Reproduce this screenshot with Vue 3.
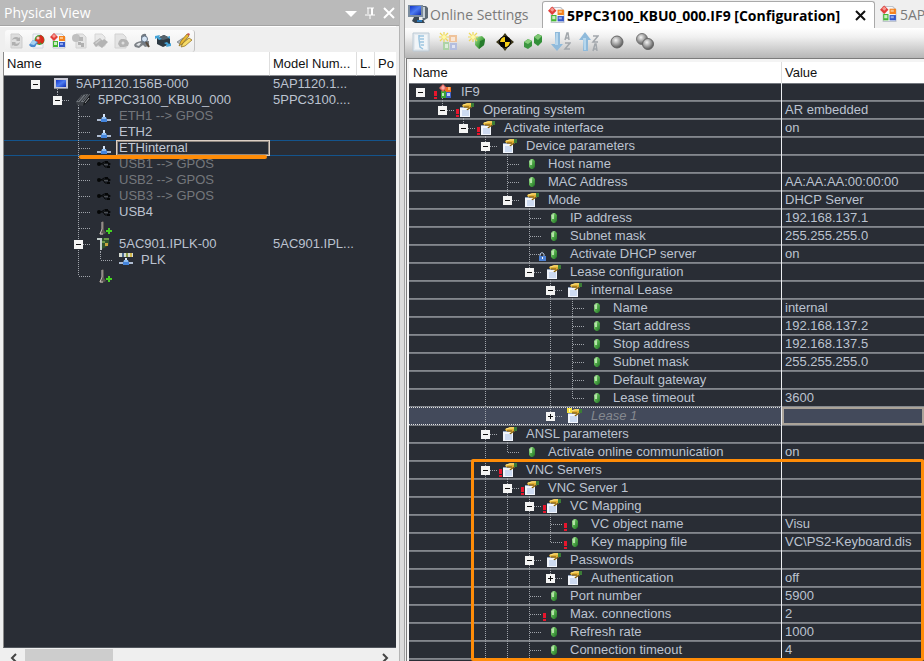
<script setup>
const leftTools = ['refresh', 'sphere', 'blocks', 'grayNodes', 'grayChip', 'grayGear', 'magnify', 'swap', 'pencil']
const rightTools = ['paramList', 'newGroup', 'newGem', 'target', 'gems', 'sortDown', 'sortUp', 'ball', 'balls']

const hardware = [
  { d: 0, name: '5AP1120.156B-000', model: '5AP1120.1...', icon: 'screen', box: '-', last: true },
  { d: 1, name: '5PPC3100_KBU0_000', model: '5PPC3100....', icon: 'pc', box: '-', last: true },
  { d: 2, name: 'ETH1 --> GPOS', icon: 'eth', dim: true },
  { d: 2, name: 'ETH2', icon: 'eth' },
  { d: 2, name: 'ETHinternal', icon: 'eth', selected: true },
  { d: 2, name: 'USB1 --> GPOS', icon: 'usb', dim: true },
  { d: 2, name: 'USB2 --> GPOS', icon: 'usb', dim: true },
  { d: 2, name: 'USB3 --> GPOS', icon: 'usb', dim: true },
  { d: 2, name: 'USB4', icon: 'usb' },
  { d: 2, name: '', icon: 'slot' },
  { d: 2, name: '5AC901.IPLK-00', model: '5AC901.IPL...', icon: 'card', box: '-' },
  { d: 3, name: 'PLK', icon: 'plk', last: true },
  { d: 2, name: '', icon: 'slot', last: true },
]

const params = [
  { d: 0, name: 'IF9', icon: 'module', box: '-', req: true },
  { d: 1, name: 'Operating system', value: 'AR embedded', icon: 'group', box: '-', req: true },
  { d: 2, name: 'Activate interface', value: 'on', icon: 'group', box: '-', req: true },
  { d: 3, name: 'Device parameters', icon: 'group', box: '-' },
  { d: 4, name: 'Host name', icon: 'gem' },
  { d: 4, name: 'MAC Address', value: 'AA:AA:AA:00:00:00', icon: 'gem' },
  { d: 4, name: 'Mode', value: 'DHCP Server', icon: 'group', box: '-' },
  { d: 5, name: 'IP address', value: '192.168.137.1', icon: 'gem' },
  { d: 5, name: 'Subnet mask', value: '255.255.255.0', icon: 'gem' },
  { d: 5, name: 'Activate DHCP server', value: 'on', icon: 'gem', lock: true },
  { d: 5, name: 'Lease configuration', icon: 'group', box: '-' },
  { d: 6, name: 'internal Lease', icon: 'group', box: '-' },
  { d: 7, name: 'Name', value: 'internal', icon: 'gem' },
  { d: 7, name: 'Start address', value: '192.168.137.2', icon: 'gem' },
  { d: 7, name: 'Stop address', value: '192.168.137.5', icon: 'gem' },
  { d: 7, name: 'Subnet mask', value: '255.255.255.0', icon: 'gem' },
  { d: 7, name: 'Default gateway', icon: 'gem' },
  { d: 7, name: 'Lease timeout', value: '3600', icon: 'gem' },
  { d: 6, name: 'Lease 1', icon: 'newgroup', box: '+', active: true },
  { d: 3, name: 'ANSL parameters', icon: 'group', box: '-' },
  { d: 4, name: 'Activate online communication', value: 'on', icon: 'gem' },
  { d: 3, name: 'VNC Servers', icon: 'group', box: '-', req: true },
  { d: 4, name: 'VNC Server 1', icon: 'group', box: '-', req: true },
  { d: 5, name: 'VC Mapping', icon: 'group', box: '-', req: true },
  { d: 6, name: 'VC object name', value: 'Visu', icon: 'gem', req: true },
  { d: 6, name: 'Key mapping file', value: 'VC\\PS2-Keyboard.dis', icon: 'gem', req: true },
  { d: 5, name: 'Passwords', icon: 'group', box: '-' },
  { d: 6, name: 'Authentication', value: 'off', icon: 'group', box: '+' },
  { d: 5, name: 'Port number', value: '5900', icon: 'gem' },
  { d: 5, name: 'Max. connections', value: '2', icon: 'gem', req: true },
  { d: 5, name: 'Refresh rate', value: '1000', icon: 'gem' },
  { d: 5, name: 'Connection timeout', value: '4', icon: 'gem' },
]

// Column of the guide line for a tree depth
const hwX = d => 31 + Math.round(d * 21.6)
const parX = d => 11 + Math.round(d * 21.7)

// Branches that still have siblings below the last visible row
const openBelow = [3, 4, 5]

function hasNext(list, i, depth, open) {
  for (let j = i + 1; j < list.length; j++) {
    if (list[j].d < depth) return false
    if (list[j].d === depth) return true
  }
  return open.includes(depth)
}

function guides(list, i, x, h, open) {
  const row = list[i]
  const mid = Math.floor(h / 2)
  let path = ''
  for (let k = 1; k < row.d; k++) {
    if (hasNext(list, i, k, open)) path += `M${x(k)}.5 0V${h}`
  }
  if (row.d > 0) {
    path += `M${x(row.d)}.5 0V${hasNext(list, i, row.d, open) ? h : mid}`
    path += `M${x(row.d) + 1} ${mid}.5h12`
  }
  if (row.box === '-') path += `M${x(row.d + 1)}.5 ${h - 3}V${h}`
  return path
}

const hwGuides = hardware.map((_, i) => guides(hardware, i, hwX, 16, []))
const parGuides = params.map((_, i) => guides(params, i, parX, 18, openBelow))
</script>

<template>
  <div class="ide">
    <svg class="sprites" width="0" height="0" aria-hidden="true">
      <defs>
        <linearGradient id="gGem" x1="0" y1="0" x2="1" y2="1">
          <stop offset="0" stop-color="#b9e6ae" /><stop offset=".45" stop-color="#54ae4b" /><stop offset="1" stop-color="#1f6a25" />
        </linearGradient>
        <radialGradient id="gBall" cx=".4" cy=".35" r=".7">
          <stop offset="0" stop-color="#f4f4f4" /><stop offset=".5" stop-color="#a2a2a2" /><stop offset="1" stop-color="#4c4c4c" />
        </radialGradient>
        <linearGradient id="gScreen" x1="0" y1="0" x2="1" y2="1">
          <stop offset="0" stop-color="#1536c8" /><stop offset=".5" stop-color="#4d7cf2" /><stop offset="1" stop-color="#0f2bb0" />
        </linearGradient>
        <symbol id="refresh" viewBox="0 0 16 16">
          <path d="M3 1h8l3 3v11H3z" fill="#dedede" stroke="#cdcdcd" />
          <path d="M4 7q1-3 4-3 2 0 3 1l1-1v4H8l1-1q-2-2-5 0zM12 9q-1 4-4 4-2 0-3-1l-1 1V9h4l-1 1q2 2 5-1z" fill="#b0b0b0" />
        </symbol>
        <symbol id="sphere" viewBox="0 0 16 16">
          <path d="M4 1h7l3 3v11H4z" fill="#f3f5fa" stroke="#d0d5df" />
          <circle cx="10.500" cy="7" r="5" fill="#3aa135" /><path d="M11 2a5 5 0 0 1 2 9q-4-3-2-9z" fill="#d92a1c" />
          <path d="M8 4q3-2 4 2l-1 5q-4 0-5-3z" fill="#d9392a" /><circle cx="9" cy="5" r="1.500" fill="#ffc9bd" />
          <path d="M0 12l4-5 5 2-3 5H2z" fill="#4a8ad0" /><path d="M1 11l3-4 4 2-3 3z" fill="#a6d2f3" />
        </symbol>
        <symbol id="blocks" viewBox="0 0 16 16">
          <path d="M3 1h9l3 3v11H3z" fill="#f6f7fa" stroke="#bfc4cc" />
          <path d="M4 0l4 4-4 4-4-4z" fill="#e23f3a" /><path d="M4 1l2 2-2 2-2-2z" fill="#f69a92" />
          <path d="M9 3h6v5H9z" fill="#f5821f" /><path d="M3 8h5v6H3z" fill="#45b534" /><path d="M9 9h6v5H9z" fill="#3458c9" />
          <path d="M10 4h3v2h-3z" fill="#fbc184" /><path d="M4 9h3v3H4z" fill="#c9efc0" /><path d="M10 10h3v2h-3z" fill="#93a8ee" />
        </symbol>
        <symbol id="grayNodes" viewBox="0 0 16 16">
          <path d="M5 1h7l3 3v11H5z" fill="#e4e4e4" stroke="#d2d2d2" />
          <circle cx="5" cy="5" r="4" fill="#c0c0c0" /><path d="M8 4h4v4H8z" fill="#b6b6b6" /><path d="M7 9h3v3H7zM10 10h3v4h-3z" fill="#b0b0b0" />
        </symbol>
        <symbol id="grayChip" viewBox="0 0 16 16">
          <path d="M3 1h7l3 3v9H3z" fill="#e9e9e9" stroke="#d6d6d6" />
          <path d="M1 10l7-5 3 3-7 6zM6 12l6-6 4 3-6 6z" fill="#b4b4b4" /><path d="M3 10l5-4 1 1-5 4z" fill="#d0d0d0" />
        </symbol>
        <symbol id="grayGear" viewBox="0 0 16 16">
          <path d="M2 1h8l3 3v11H2z" fill="#e4e4e4" stroke="#d2d2d2" />
          <path d="M8 6h3l3 1 2 3-1 3-4 1-4 0-2-3 1-3z" fill="#b4b4b4" /><circle cx="10" cy="10" r="1.500" fill="#dedede" />
        </symbol>
        <symbol id="magnify" viewBox="0 0 16 16">
          <path d="M0 12q1-3 7-4h8v5l-4 1-2-2-4 3-4-1z" fill="#7c8186" /><path d="M2 12q3-3 5-2l-2 3z" fill="#e2e5e8" />
          <path d="M7 7v-4q2-3 5-2l1 9-4 2z" fill="#737a82" /><circle cx="10.500" cy="6" r="3" fill="#d5e4f4" stroke="#667587" />
          <path d="M12 9l3 5" stroke="#5a4d40" stroke-width="2" />
        </symbol>
        <symbol id="swap" viewBox="0 0 16 16">
          <path d="M2 5l7-3 6 3v6l-7 3-6-3z" fill="#2d3942" /><path d="M2 5l7-3 6 3-7 2z" fill="#56626b" />
          <path d="M0 3l5-1-1 2 3 2-3 1-2-2-2 1z" fill="#45a4d8" /><path d="M16 13l-5 1 1-2-3-2 3-1 2 2 2-1z" fill="#45a4d8" />
          <path d="M12 4l3-1v3z" fill="#45a4d8" />
        </symbol>
        <symbol id="pencil" viewBox="0 0 16 16">
          <path d="M1 9l6-4 8 2-8 6z" fill="#b4b9be" stroke="#777b80" stroke-width=".7" /><path d="M3 13l2-5 6-7 2 2-7 8z" fill="#e9b832" stroke="#8c6a18" stroke-width=".7" />
          <path d="M5 14l2-4 6-5 3 2-7 6z" fill="#f7dc69" stroke="#8c6a18" stroke-width=".7" /><path d="M11 1l2 2 1-2-2-1z" fill="#cc5750" />
        </symbol>
        <symbol id="screen" viewBox="0 0 16 16">
          <path d="M1 2h14v11H1z" fill="#c9cad6" /><path d="M3 4h10v7H3z" fill="url(#gScreen)" /><path d="M1 12h14v1H1z" fill="#8d8f9b" />
        </symbol>
        <symbol id="pc" viewBox="0 0 16 16">
          <path d="M1 10l6-7 8-1v6l-7 6-6-1z" fill="#3c4046" /><path d="M1 10l6-7 8-1-6 8z" fill="#6f747a" />
          <path d="M3 9l5-6M5 10l6-7M8 9l6-7" stroke="#30343a" /><path d="M9 10l6-7v5l-7 6z" fill="#17191c" /><path d="M10 11l4-5" stroke="#9ba0a6" />
        </symbol>
        <symbol id="eth" viewBox="0 0 16 16">
          <path d="M1 11h5v2H1zM10 11h5v2h-5z" fill="#aebbd0" /><path d="M7 6h2v5H7z" fill="#d7e5f6" />
          <path d="M6 9h4l1 3H5z" fill="#8dbcf2" /><path d="M5 11h6v3H5z" fill="#4585dc" />
        </symbol>
        <symbol id="usb" viewBox="0 0 16 16">
          <circle cx="3" cy="8" r="2" fill="#050607" /><path d="M3 8h10M5 8l3-2h2M7 8l2 3h2" fill="none" stroke="#050607" />
          <path d="M9 5h3v2H9zM11 10h3v2h-3zM12 6l3 2-3 2z" fill="#050607" /><path d="M8 8h4v1H8z" fill="#4b4e52" />
        </symbol>
        <symbol id="slot" viewBox="0 0 16 16">
          <path d="M6 1l2 1v8l2 3-4 2-3-1 3-4z" fill="#5c5753" /><path d="M6 2v7l-2 5h3" fill="none" stroke="#c9c1bb" />
          <path d="M10 11h6M13 8v6" stroke="#45d323" stroke-width="2" />
        </symbol>
        <symbol id="card" viewBox="0 0 16 16">
          <path d="M1 2h5v12H4V4H1z" fill="#c3cecb" /><path d="M6 2h7v6l-3 3-4 2z" fill="#31562e" />
          <path d="M8 2h5v2H8zM6 5h3v2H6z" fill="#6f9a4a" /><path d="M9 7h3v3H9z" fill="#c9a63c" />
        </symbol>
        <symbol id="plk" viewBox="0 0 16 16">
          <path d="M1 1h14v4H1z" fill="#d5dad1" /><path d="M4 1h2v4H4z" fill="#4c6b90" /><path d="M8 1h2v4H8z" fill="#8d9f47" /><path d="M12 1h2v4h-2z" fill="#d1b64d" />
          <path d="M1 10h5v2H1zM10 10h5v2h-5z" fill="#aebbd0" /><path d="M7 6h2v4H7z" fill="#d7e5f6" /><path d="M6 8h4l1 3H5z" fill="#8dbcf2" /><path d="M5 10h6v3H5z" fill="#4585dc" />
        </symbol>
        <symbol id="module" viewBox="0 0 16 16">
          <path d="M8 3h6v5H8z" fill="#f2701d" /><path d="M4 7h5v7H4z" fill="#3da536" /><path d="M9 8h5v6H9z" fill="#4060c4" />
          <path d="M6 0l4 4-4 4-4-4z" fill="#e0645e" /><path d="M6 1l2 3-2 2-2-2z" fill="#f5aaa4" />
          <path d="M11 3h2v3h-2z" fill="#fab070" /><path d="M5 9h2v3H5z" fill="#bfe8ba" /><path d="M10 9h3v3h-3z" fill="#c0cefa" />
        </symbol>
        <symbol id="group" viewBox="0 0 16 16">
          <path d="M1 5h10v10H1z" fill="#f1f5fc" /><path d="M1 5h10v1H1z" fill="#8fa3c0" />
          <path d="M3 9h7M3 11h7M3 13h7" stroke="#a9c0e6" />
          <path d="M3 3l5-2h5v4l-4 3H7l2-2-5-1z" fill="#e2b030" /><path d="M4 3l4-1h4" stroke="#fbe48c" fill="none" /><path d="M5 5l5 0M8 8l4-3" stroke="#6a4d1a" fill="none" />
          <path d="M12 1h3v4h-3z" fill="#3c7d37" />
        </symbol>
        <symbol id="newgroup" viewBox="0 0 16 16">
          <use href="#group" /><path d="M0 0h5v5H0z" fill="#f4df3d" /><path d="M2 1h1v3H2z" fill="#fffbc5" />
        </symbol>
        <symbol id="gem" viewBox="0 0 16 16">
          <path d="M7 3h2l2 2v6l-2 2H7l-2-2V5z" fill="url(#gGem)" /><path d="M6 5l2-1v5L6 9z" fill="#b5e3a9" />
        </symbol>
        <symbol id="star" viewBox="0 0 10 10">
          <path d="M5 0v10M0 5h10M1 1l8 8M9 1L1 9" stroke="#eed95a" stroke-width="1.200" /><circle cx="5" cy="5" r="2" fill="#fff9a9" />
        </symbol>
        <symbol id="paramList" viewBox="0 0 20 20">
          <path d="M2 1h16v18H2z" fill="#e4eaef" stroke="#bccad5" /><path d="M4 3h12v14H4z" fill="#f1f5f8" />
          <path d="M8 3v4l1 8 3 2M8 4h5M9 7h4M9 10h4M10 13h3" stroke="#9cc5e0" stroke-width="1.500" fill="none" />
        </symbol>
        <symbol id="newGroup" viewBox="0 0 20 20">
          <path d="M10 3h8v7h-8z" fill="#efc39b" /><path d="M4 10h6v8H4z" fill="#add3a6" /><path d="M11 11h7v7h-7z" fill="#b4bedf" />
          <path d="M12 5h4v4h-4zM13 13h3v3h-3zM6 12h3v4H6z" fill="#fff" opacity=".6" /><use href="#star" x="0" y="0" width="10" height="10" />
        </symbol>
        <symbol id="newGem" viewBox="0 0 20 20">
          <path d="M9 5l6-1 3 3-1 6-5 4-4-4V8z" fill="url(#gGem)" /><path d="M13 9l-1 8 5-4 1-6z" fill="#267b2c" /><use href="#star" x="1" y="0" width="10" height="10" />
        </symbol>
        <symbol id="target" viewBox="0 0 20 20">
          <path d="M10 1l3 4 6 5-6 5-3 4-3-4-6-5 6-5z" fill="#3a351a" /><circle cx="10" cy="10" r="6" fill="#050505" />
          <path d="M10 5v5H5q1-5 5-5zM10 10h5q-1 5-5 5z" fill="#f7d018" />
        </symbol>
        <symbol id="gems" viewBox="0 0 20 20">
          <path d="M1 10l4-3 4 2v5l-4 3-4-2z" fill="#3b9640" /><path d="M1 10l4-3 4 2-4 3z" fill="#88cf7c" />
          <path d="M11 5l4-3 4 2v6l-4 4-4-3z" fill="#339039" /><path d="M11 5l4-3 4 2-4 4z" fill="#7dc672" />
        </symbol>
        <symbol id="sortDown" viewBox="0 0 20 20">
          <path d="M4 0h5v12h3l-6 7-6-7h4z" fill="#8fbadb" /><path d="M5 1h2v12H4z" fill="#b7d7ed" />
          <path d="M14 8l2-7h1l1 7M14 6h4M14 11h5l-5 6h5" fill="none" stroke="#a2a7ac" stroke-width="1.500" />
        </symbol>
        <symbol id="sortUp" viewBox="0 0 20 20">
          <path d="M4 19h5V8h3L6 0 0 8h4z" fill="#8fbadb" /><path d="M5 18h2V6H4z" fill="#b7d7ed" />
          <path d="M14 4h5l-5 6h5M14 19l2-7h1l1 7M14 17h4" fill="none" stroke="#a2a7ac" stroke-width="1.500" />
        </symbol>
        <symbol id="ball" viewBox="0 0 20 20"><circle cx="10" cy="10" r="6" fill="url(#gBall)" stroke="#686868" /></symbol>
        <symbol id="balls" viewBox="0 0 20 20">
          <circle cx="7" cy="7" r="5.500" fill="url(#gBall)" stroke="#777" /><circle cx="13" cy="12" r="5.500" fill="url(#gBall)" stroke="#686868" />
        </symbol>
        <symbol id="monitor" viewBox="0 0 20 20">
          <path d="M12 2h6l2 2v10l-5 3z" fill="#5d6974" /><path d="M14 3h3v11h-3z" fill="#c7d0d8" /><path d="M0 1h15v12H0z" fill="#7b8c9e" />
          <path d="M2 2h11v9H2z" fill="url(#gScreen)" /><path d="M6 13h5v3h4l2 3H7l-3-2z" fill="#394754" /><path d="M9 16h5v2H9z" fill="#2c79b9" />
        </symbol>
      </defs>
    </svg>

    <aside class="physical">
      <header class="caption">
        <h1>Physical View</h1>
        <button aria-label="Window menu"><svg width="12" height="12"><path d="M0 4h12L6 10z" fill="#fff" /></svg></button>
        <button aria-label="Auto hide"><svg width="12" height="12"><path d="M3 1h7M4 1v6M1 8h10M6 8v4" fill="none" stroke="#fff" stroke-width="1" /><path d="M7 1h2v7H7z" fill="#fff" /></svg></button>
        <button aria-label="Close panel"><svg width="12" height="12"><path d="M1 1l10 10M11 1L1 11" stroke="#fff" stroke-width="2" /></svg></button>
      </header>
      <div class="tools">
        <div class="strip">
          <button v-for="t in leftTools" :key="t" :aria-label="t"><svg width="16" height="16"><use :href="'#' + t" /></svg></button>
        </div>
      </div>
      <div class="hardware">
        <table>
          <colgroup><col class="c-name"><col class="c-model"><col class="c-l"><col></colgroup>
          <thead><tr><th>Name</th><th>Model Num...</th><th>L.</th><th>Po</th></tr></thead>
          <tbody>
            <tr v-for="(r, i) in hardware" :key="i" :class="{ selected: r.selected, dim: r.dim }">
              <td>
                <div class="node">
                  <svg class="guides" width="240" height="16"><path :d="hwGuides[i]" /></svg>
                  <div class="entry" :style="{ paddingLeft: hwX(r.d) - 4 + 'px' }">
                    <button v-if="r.box" class="box" :aria-label="'Toggle ' + r.name"><svg width="9" height="9"><path d="M2 4.500h5" /></svg></button>
                    <span v-else class="box-space"></span>
                    <svg class="icon" width="16" height="16"><use :href="'#' + r.icon" /></svg>
                    <input v-if="r.selected" :value="r.name" aria-label="Interface name">
                    <span v-else class="label">{{ r.name }}</span>
                  </div>
                  <i v-if="r.selected" class="underline"></i>
                </div>
              </td>
              <td>{{ r.model }}</td><td></td><td></td>
            </tr>
          </tbody>
        </table>
      </div>
      <div class="scroll">
        <button aria-label="Scroll left"><svg width="8" height="10"><path d="M6 1L2 5l4 4" /></svg></button>
        <span class="thumb"></span>
        <button aria-label="Scroll right"><svg width="8" height="10"><path d="M2 1l4 4-4 4" /></svg></button>
      </div>
    </aside>

    <main class="editor">
      <nav class="tabs">
        <a href="#online" class="tab first"><svg width="20" height="20"><use href="#monitor" /></svg>Online Settings</a>
        <a href="#config" class="tab current"><svg width="17" height="18"><use href="#blocks" /></svg><span>5PPC3100_KBU0_000.IF9 [Configuration]</span>
          <svg class="close" width="11" height="11"><path d="M1 1l9 9M10 1l-9 9" stroke="#111" stroke-width="2" /></svg></a>
        <a href="#next" class="tab next"><svg width="17" height="18"><use href="#blocks" /></svg>5AP</a>
      </nav>
      <div class="bar">
        <button v-for="t in rightTools" :key="t" :aria-label="t"><svg width="20" height="20"><use :href="'#' + t" /></svg></button>
      </div>
      <div class="sheet">
        <table>
          <colgroup><col class="c-param"><col></colgroup>
          <thead><tr><th>Name</th><th>Value</th></tr></thead>
          <tbody>
            <tr v-for="(r, i) in params" :key="i" :class="{ active: r.active }">
              <td>
                <div class="node">
                  <svg class="guides" width="240" height="18"><path :d="parGuides[i]" /></svg>
                  <div class="entry" :style="{ paddingLeft: parX(r.d) - 4 + 'px' }">
                    <button v-if="r.box" class="box" :aria-label="'Toggle ' + r.name"><svg width="9" height="9"><path :d="r.box === '+' ? 'M2 4.500h5M4.500 2v5' : 'M2 4.500h5'" /></svg></button>
                    <span v-else class="box-space"></span>
                    <svg class="mark" width="8" height="18">
                      <path v-if="r.req" d="M5 8h3v5H5zM5 14h3v2H5z" fill="#e8152c" />
                      <g v-if="r.lock"><path d="M2 11V9q2-3 4 0v2" fill="none" stroke="#b9cbe6" /><path d="M1 11h7v5H1z" fill="#4c80d4" /><path d="M4 12h1v2H4z" fill="#fff" /></g>
                    </svg>
                    <svg class="icon" width="16" height="16"><use :href="'#' + r.icon" /></svg>
                    <span class="label">{{ r.name }}</span>
                  </div>
                </div>
              </td>
              <td>{{ r.value }}</td>
            </tr>
            <tr><td></td><td></td></tr>
          </tbody>
        </table>
        <div class="highlight"></div>
      </div>
    </main>
  </div>
</template>

<style>
body {
  overflow: hidden;
}
</style>

<style scoped>
.ide {
  display: flex;
  height: 100vh;
  overflow: hidden;
  background: #dcdcdc;
  font-family: "Liberation Sans", Arial, sans-serif;
  font-size: 13px;
  color: #bcc3d0;
}
.sprites {
  position: absolute;
}
.ide * {
  box-sizing: border-box;
}
svg {
  display: block;
  flex: none;
}
button {
  display: block;
  padding: 0;
  border: 0;
  background: none;
}
table {
  width: 100%;
  table-layout: fixed;
  border-spacing: 0;
}
th {
  padding: 0 3px;
  background: #fff;
  color: #111;
  font-weight: 400;
  text-align: left;
  white-space: nowrap;
  overflow: hidden;
}
td {
  padding: 0;
  white-space: nowrap;
}

/* Physical view */
.physical {
  display: flex;
  flex-direction: column;
  width: 400px;
  flex: none;
  padding-right: 3px;
  background: #efefef;
  border-right: 1px solid #b4b4b4;
}
.caption {
  display: flex;
  align-items: center;
  gap: 7px;
  height: 26px;
  margin-right: -3px;
  padding: 0 4px 0 4px;
  background: #bababa;
  border-bottom: 1px solid #a4a4a4;
}
.caption h1 {
  flex: 1;
  margin: 0;
  font: 400 14px "Open Sans", sans-serif;
  color: #fff;
}
.tools {
  height: 26px;
  padding: 3px 0 0 5px;
  border-top: 1px solid #fff;
}
.strip {
  display: flex;
  align-items: center;
  gap: 5px;
  width: 190px;
  height: 22px;
  padding: 0 3px;
  border-right: 1px solid #c2c2c2;
  border-radius: 3px;
  background: linear-gradient(#fbfbfb, #ededed);
}
.hardware {
  flex: 1;
  margin-left: 3px;
  border-left: 1px solid #8a8a8a;
  border-bottom: 1px solid #50555c;
  background: #292d35;
  overflow: hidden;
}
.c-name { width: 266px; }
.c-model { width: 87px; }
.c-l { width: 18px; }
.hardware th {
  height: 24px;
  border-right: 1px solid #dedede;
  border-bottom: 1px solid #8e9094;
}
.hardware th:last-child {
  border-right: 0;
}
.hardware td {
  height: 16px;
  line-height: 16px;
}
.hardware td + td {
  padding-left: 3px;
}
.node {
  position: relative;
  display: grid;
}
.node > .guides,
.node > .entry {
  grid-area: 1 / 1;
}
.guides path {
  fill: none;
  stroke: #a0a4ab;
  stroke-dasharray: 1 1;
}
.entry {
  display: flex;
  align-items: center;
  position: relative;
}
.box {
  width: 9px;
  height: 9px;
  background: #f4f4f4;
}
.box path {
  stroke: #111;
}
.box-space {
  width: 9px;
}
.hardware .icon {
  margin-left: 13px;
}
.hardware .entry {
  height: 16px;
}
.hardware .label {
  margin-left: 7px;
}
.dim .label {
  color: #74777c;
}
.selected td {
  box-shadow: inset 0 1px #14548c, inset 0 -1px #14548c;
}
.entry input {
  width: 154px;
  height: 16px;
  margin-left: 4px;
  padding: 0 2px;
  border: 1px solid #dccfc4;
  outline: 1px solid #8f8780;
  outline-offset: -2px;
  background: #292d35;
  color: #c4cad6;
  font: inherit;
}
.underline {
  position: absolute;
  top: 15px;
  left: 75px;
  z-index: 2;
  width: 188px;
  height: 4px;
  border-radius: 2px;
  background: #ff8c08;
}
.scroll {
  display: flex;
  flex: none;
  height: 13px;
  margin-left: 3px;
  padding: 5px 7px 0;
}
.scroll path {
  fill: none;
  stroke: #444;
  stroke-width: 2;
}
.thumb {
  width: 88px;
  height: 13px;
  margin: -4px auto 0 7px;
  background: #cdcdcd;
}

/* Configuration editor */
.editor {
  display: flex;
  flex-direction: column;
  flex: 1;
  min-width: 0;
  margin-left: 4px;
  border-left: 1px solid #a2a2a2;
  background: #efefef;
}
.tabs {
  display: flex;
  height: 28px;
  padding-left: 3px;
  overflow: hidden;
}
.tab {
  display: flex;
  flex: none;
  align-items: center;
  gap: 4px;
  padding: 0 5px;
  font: 400 14px "Open Sans", sans-serif;
  color: #7a7a7a;
  text-decoration: none;
  white-space: nowrap;
}
.tab.first {
  gap: 2px;
  width: 134px;
  padding: 0;
}
.tab.next {
  gap: 3px;
}
.tab.current {
  gap: 2px;
  width: 333px;
  margin-top: 1px;
  border: 1px solid #a9a9a9;
  border-bottom: 0;
  border-radius: 3px 3px 0 0;
  background: #fff;
  color: #000;
  font-weight: 700;
}
.close {
  margin: 0 3px 0 auto;
}
.bar {
  display: flex;
  flex: none;
  align-items: center;
  gap: 8px;
  height: 30px;
  padding: 0 6px 2px;
  background: linear-gradient(#fff, #f0f0f0 30%, #b6b6b6);
}
.sheet {
  position: relative;
  flex: 1;
  min-height: 0;
  margin-left: 1px;
  padding: 3px 0 0 2px;
  border-top: 1px solid #7c7c7c;
  border-left: 1px solid #7c7c7c;
  background: #f4f4f4;
  overflow: hidden;
}
.c-param { width: 373px; }
.sheet th {
  height: 21px;
}
.sheet th:first-child {
  padding-left: 4px;
  border-right: 1px solid #dedede;
}
.sheet td {
  height: 18px;
  line-height: 18px;
  background: #292d35;
  box-shadow: inset 0 -1px #83878d, inset 0 1px #74787f;
}
.sheet td:first-child {
  border-right: 1px solid #eceef2;
}
.sheet td + td {
  padding-left: 3px;
}
.sheet .entry {
  height: 18px;
}
.mark {
  margin-left: 4px;
}
.sheet .label {
  margin-left: 8px;
}
.sheet .active td {
  background: #434a5b;
  box-shadow: none;
  border-top: 1px dotted #e2e2e2;
  border-bottom: 1px dotted #e2e2e2;
}
.active .node {
  margin: -1px 0;
}
.sheet .active td + td {
  border: 2px solid #aaa399;
}
.active .label {
  color: #858990;
  font-style: italic;
}
.highlight {
  position: absolute;
  top: 400px;
  right: 0;
  left: 64px;
  height: 202px;
  border: 3px solid #ff8c08;
  border-radius: 2px;
}
</style>
